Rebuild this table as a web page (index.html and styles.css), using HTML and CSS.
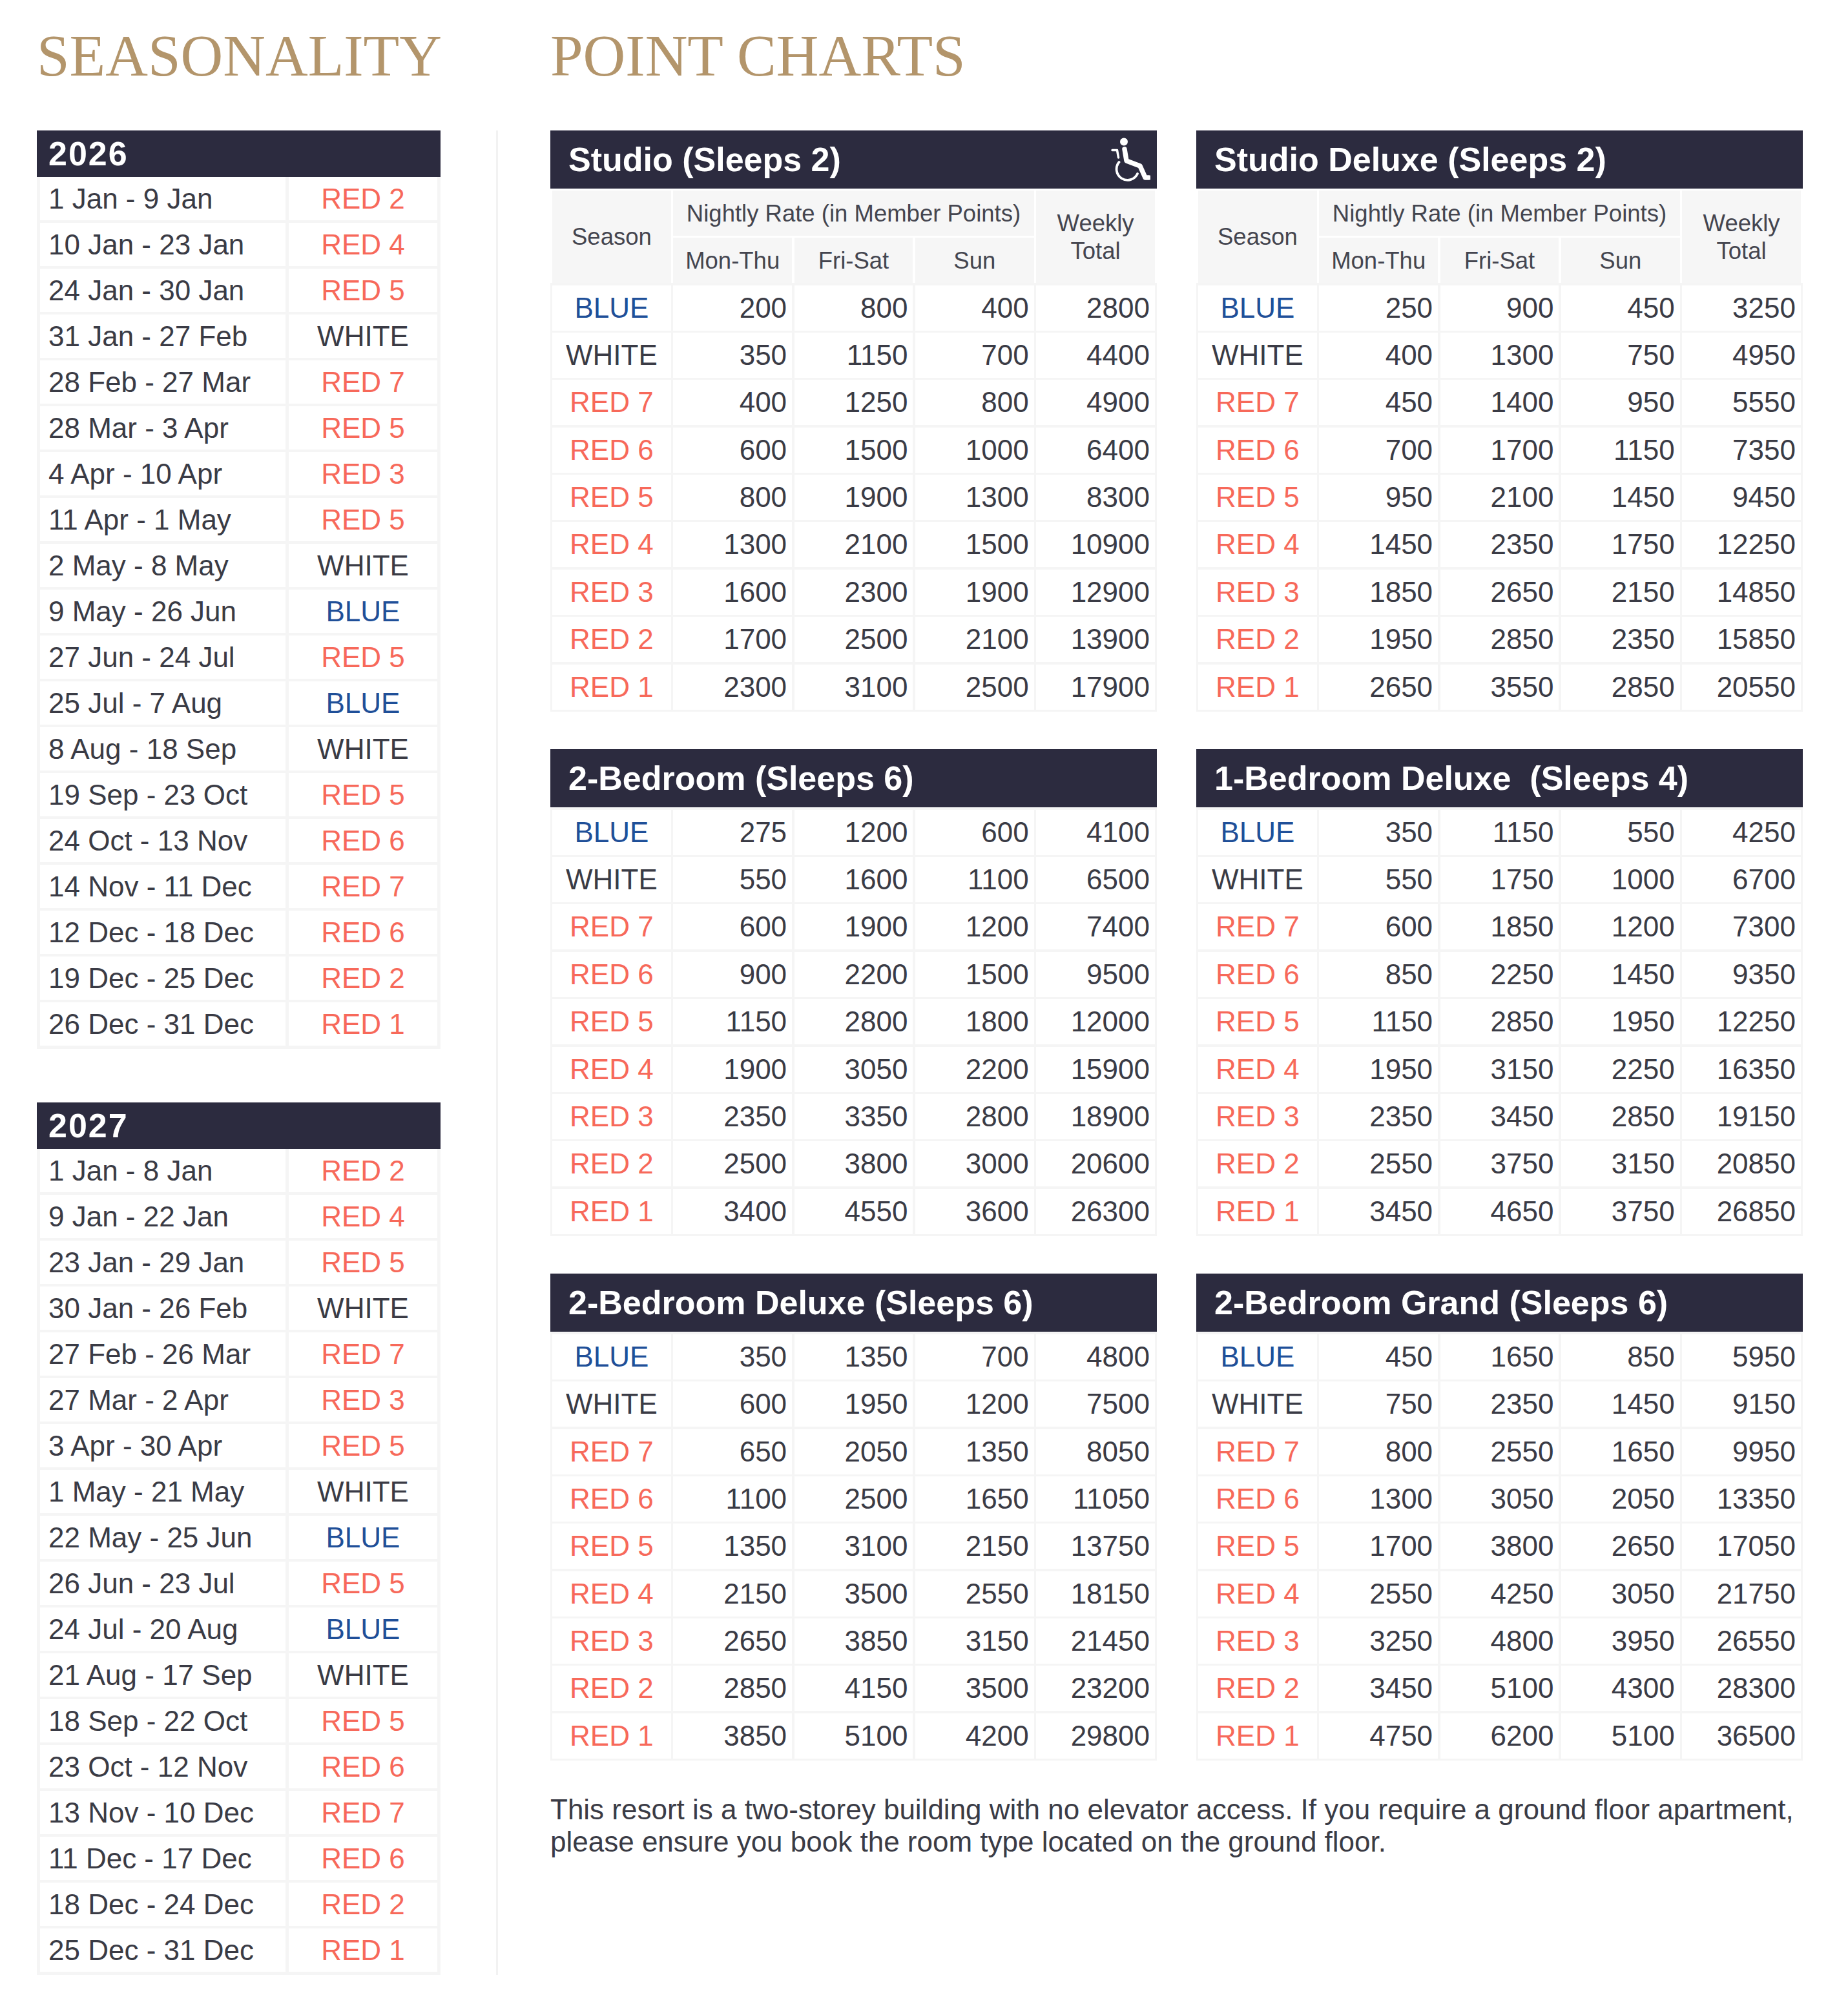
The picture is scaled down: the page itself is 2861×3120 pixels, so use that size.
FILE: index.html
```html
<!DOCTYPE html>
<html lang="en">
<head>
<meta charset="utf-8">
<title>Seasonality &amp; Point Charts</title>
<link rel="stylesheet" href="styles.css">
</head>
<body>
<div class="page">
  <section class="seasonality">
    <h1 class="title">SEASONALITY</h1>

    <div class="year">2026</div>
    <div class="season-grid">
      <div class="date">1 Jan - 9 Jan</div><div class="sea red">RED 2</div>
      <div class="date">10 Jan - 23 Jan</div><div class="sea red">RED 4</div>
      <div class="date">24 Jan - 30 Jan</div><div class="sea red">RED 5</div>
      <div class="date">31 Jan - 27 Feb</div><div class="sea">WHITE</div>
      <div class="date">28 Feb - 27 Mar</div><div class="sea red">RED 7</div>
      <div class="date">28 Mar - 3 Apr</div><div class="sea red">RED 5</div>
      <div class="date">4 Apr - 10 Apr</div><div class="sea red">RED 3</div>
      <div class="date">11 Apr - 1 May</div><div class="sea red">RED 5</div>
      <div class="date">2 May - 8 May</div><div class="sea">WHITE</div>
      <div class="date">9 May - 26 Jun</div><div class="sea blue">BLUE</div>
      <div class="date">27 Jun - 24 Jul</div><div class="sea red">RED 5</div>
      <div class="date">25 Jul - 7 Aug</div><div class="sea blue">BLUE</div>
      <div class="date">8 Aug - 18 Sep</div><div class="sea">WHITE</div>
      <div class="date">19 Sep - 23 Oct</div><div class="sea red">RED 5</div>
      <div class="date">24 Oct - 13 Nov</div><div class="sea red">RED 6</div>
      <div class="date">14 Nov - 11 Dec</div><div class="sea red">RED 7</div>
      <div class="date">12 Dec - 18 Dec</div><div class="sea red">RED 6</div>
      <div class="date">19 Dec - 25 Dec</div><div class="sea red">RED 2</div>
      <div class="date">26 Dec - 31 Dec</div><div class="sea red">RED 1</div>
    </div>

    <div class="year year-2">2027</div>
    <div class="season-grid">
      <div class="date">1 Jan - 8 Jan</div><div class="sea red">RED 2</div>
      <div class="date">9 Jan - 22 Jan</div><div class="sea red">RED 4</div>
      <div class="date">23 Jan - 29 Jan</div><div class="sea red">RED 5</div>
      <div class="date">30 Jan - 26 Feb</div><div class="sea">WHITE</div>
      <div class="date">27 Feb - 26 Mar</div><div class="sea red">RED 7</div>
      <div class="date">27 Mar - 2 Apr</div><div class="sea red">RED 3</div>
      <div class="date">3 Apr - 30 Apr</div><div class="sea red">RED 5</div>
      <div class="date">1 May - 21 May</div><div class="sea">WHITE</div>
      <div class="date">22 May - 25 Jun</div><div class="sea blue">BLUE</div>
      <div class="date">26 Jun - 23 Jul</div><div class="sea red">RED 5</div>
      <div class="date">24 Jul - 20 Aug</div><div class="sea blue">BLUE</div>
      <div class="date">21 Aug - 17 Sep</div><div class="sea">WHITE</div>
      <div class="date">18 Sep - 22 Oct</div><div class="sea red">RED 5</div>
      <div class="date">23 Oct - 12 Nov</div><div class="sea red">RED 6</div>
      <div class="date">13 Nov - 10 Dec</div><div class="sea red">RED 7</div>
      <div class="date">11 Dec - 17 Dec</div><div class="sea red">RED 6</div>
      <div class="date">18 Dec - 24 Dec</div><div class="sea red">RED 2</div>
      <div class="date">25 Dec - 31 Dec</div><div class="sea red">RED 1</div>
    </div>
  </section>

  <div class="divider"></div>

  <section class="charts">
    <h1 class="title">POINT CHARTS</h1>

    <div class="chart-grid">
      <!-- Studio -->
      <div class="chart">
        <div class="chart-head">
          <span>Studio (Sleeps 2)</span>
          <svg class="wheelchair" viewBox="0 0 62 68" width="62" height="68" aria-label="Accessible">
            <circle cx="21" cy="6.5" r="6" fill="#fff"/>
            <path d="M22 18 L25 36 L46 44 L54 62 L60 62" fill="none" stroke="#fff" stroke-width="7.5" stroke-linejoin="round" stroke-linecap="round"/>
            <path d="M3 19.5 L10.5 19.5 L12.5 31" fill="none" stroke="#fff" stroke-width="3.5" stroke-linejoin="round" stroke-linecap="round"/>
            <path d="M13.5 38 A17 17 0 1 0 42 56" fill="none" stroke="#fff" stroke-width="3.8" stroke-linecap="round"/>
          </svg>
        </div>
        <div class="chart-sub">
          <div class="sh sh-season">Season</div>
          <div class="sh sh-nightly">Nightly Rate (in Member Points)</div>
          <div class="sh sh-weekly">Weekly<br>Total</div>
          <div class="sh">Mon-Thu</div><div class="sh">Fri-Sat</div><div class="sh">Sun</div>
        </div>
        <div class="chart-table">
          <div class="c s blue">BLUE</div><div class="c">200</div><div class="c">800</div><div class="c">400</div><div class="c">2800</div>
          <div class="c s">WHITE</div><div class="c">350</div><div class="c">1150</div><div class="c">700</div><div class="c">4400</div>
          <div class="c s red">RED 7</div><div class="c">400</div><div class="c">1250</div><div class="c">800</div><div class="c">4900</div>
          <div class="c s red">RED 6</div><div class="c">600</div><div class="c">1500</div><div class="c">1000</div><div class="c">6400</div>
          <div class="c s red">RED 5</div><div class="c">800</div><div class="c">1900</div><div class="c">1300</div><div class="c">8300</div>
          <div class="c s red">RED 4</div><div class="c">1300</div><div class="c">2100</div><div class="c">1500</div><div class="c">10900</div>
          <div class="c s red">RED 3</div><div class="c">1600</div><div class="c">2300</div><div class="c">1900</div><div class="c">12900</div>
          <div class="c s red">RED 2</div><div class="c">1700</div><div class="c">2500</div><div class="c">2100</div><div class="c">13900</div>
          <div class="c s red">RED 1</div><div class="c">2300</div><div class="c">3100</div><div class="c">2500</div><div class="c">17900</div>
        </div>
      </div>

      <!-- Studio Deluxe -->
      <div class="chart">
        <div class="chart-head"><span>Studio Deluxe (Sleeps 2)</span></div>
        <div class="chart-sub">
          <div class="sh sh-season">Season</div>
          <div class="sh sh-nightly">Nightly Rate (in Member Points)</div>
          <div class="sh sh-weekly">Weekly<br>Total</div>
          <div class="sh">Mon-Thu</div><div class="sh">Fri-Sat</div><div class="sh">Sun</div>
        </div>
        <div class="chart-table">
          <div class="c s blue">BLUE</div><div class="c">250</div><div class="c">900</div><div class="c">450</div><div class="c">3250</div>
          <div class="c s">WHITE</div><div class="c">400</div><div class="c">1300</div><div class="c">750</div><div class="c">4950</div>
          <div class="c s red">RED 7</div><div class="c">450</div><div class="c">1400</div><div class="c">950</div><div class="c">5550</div>
          <div class="c s red">RED 6</div><div class="c">700</div><div class="c">1700</div><div class="c">1150</div><div class="c">7350</div>
          <div class="c s red">RED 5</div><div class="c">950</div><div class="c">2100</div><div class="c">1450</div><div class="c">9450</div>
          <div class="c s red">RED 4</div><div class="c">1450</div><div class="c">2350</div><div class="c">1750</div><div class="c">12250</div>
          <div class="c s red">RED 3</div><div class="c">1850</div><div class="c">2650</div><div class="c">2150</div><div class="c">14850</div>
          <div class="c s red">RED 2</div><div class="c">1950</div><div class="c">2850</div><div class="c">2350</div><div class="c">15850</div>
          <div class="c s red">RED 1</div><div class="c">2650</div><div class="c">3550</div><div class="c">2850</div><div class="c">20550</div>
        </div>
      </div>

      <!-- 2-Bedroom -->
      <div class="chart">
        <div class="chart-head"><span>2-Bedroom (Sleeps 6)</span></div>
        <div class="chart-table">
          <div class="c s blue">BLUE</div><div class="c">275</div><div class="c">1200</div><div class="c">600</div><div class="c">4100</div>
          <div class="c s">WHITE</div><div class="c">550</div><div class="c">1600</div><div class="c">1100</div><div class="c">6500</div>
          <div class="c s red">RED 7</div><div class="c">600</div><div class="c">1900</div><div class="c">1200</div><div class="c">7400</div>
          <div class="c s red">RED 6</div><div class="c">900</div><div class="c">2200</div><div class="c">1500</div><div class="c">9500</div>
          <div class="c s red">RED 5</div><div class="c">1150</div><div class="c">2800</div><div class="c">1800</div><div class="c">12000</div>
          <div class="c s red">RED 4</div><div class="c">1900</div><div class="c">3050</div><div class="c">2200</div><div class="c">15900</div>
          <div class="c s red">RED 3</div><div class="c">2350</div><div class="c">3350</div><div class="c">2800</div><div class="c">18900</div>
          <div class="c s red">RED 2</div><div class="c">2500</div><div class="c">3800</div><div class="c">3000</div><div class="c">20600</div>
          <div class="c s red">RED 1</div><div class="c">3400</div><div class="c">4550</div><div class="c">3600</div><div class="c">26300</div>
        </div>
      </div>

      <!-- 1-Bedroom Deluxe -->
      <div class="chart">
        <div class="chart-head"><span>1-Bedroom Deluxe&nbsp; (Sleeps 4)</span></div>
        <div class="chart-table">
          <div class="c s blue">BLUE</div><div class="c">350</div><div class="c">1150</div><div class="c">550</div><div class="c">4250</div>
          <div class="c s">WHITE</div><div class="c">550</div><div class="c">1750</div><div class="c">1000</div><div class="c">6700</div>
          <div class="c s red">RED 7</div><div class="c">600</div><div class="c">1850</div><div class="c">1200</div><div class="c">7300</div>
          <div class="c s red">RED 6</div><div class="c">850</div><div class="c">2250</div><div class="c">1450</div><div class="c">9350</div>
          <div class="c s red">RED 5</div><div class="c">1150</div><div class="c">2850</div><div class="c">1950</div><div class="c">12250</div>
          <div class="c s red">RED 4</div><div class="c">1950</div><div class="c">3150</div><div class="c">2250</div><div class="c">16350</div>
          <div class="c s red">RED 3</div><div class="c">2350</div><div class="c">3450</div><div class="c">2850</div><div class="c">19150</div>
          <div class="c s red">RED 2</div><div class="c">2550</div><div class="c">3750</div><div class="c">3150</div><div class="c">20850</div>
          <div class="c s red">RED 1</div><div class="c">3450</div><div class="c">4650</div><div class="c">3750</div><div class="c">26850</div>
        </div>
      </div>

      <!-- 2-Bedroom Deluxe -->
      <div class="chart">
        <div class="chart-head"><span>2-Bedroom Deluxe (Sleeps 6)</span></div>
        <div class="chart-table">
          <div class="c s blue">BLUE</div><div class="c">350</div><div class="c">1350</div><div class="c">700</div><div class="c">4800</div>
          <div class="c s">WHITE</div><div class="c">600</div><div class="c">1950</div><div class="c">1200</div><div class="c">7500</div>
          <div class="c s red">RED 7</div><div class="c">650</div><div class="c">2050</div><div class="c">1350</div><div class="c">8050</div>
          <div class="c s red">RED 6</div><div class="c">1100</div><div class="c">2500</div><div class="c">1650</div><div class="c">11050</div>
          <div class="c s red">RED 5</div><div class="c">1350</div><div class="c">3100</div><div class="c">2150</div><div class="c">13750</div>
          <div class="c s red">RED 4</div><div class="c">2150</div><div class="c">3500</div><div class="c">2550</div><div class="c">18150</div>
          <div class="c s red">RED 3</div><div class="c">2650</div><div class="c">3850</div><div class="c">3150</div><div class="c">21450</div>
          <div class="c s red">RED 2</div><div class="c">2850</div><div class="c">4150</div><div class="c">3500</div><div class="c">23200</div>
          <div class="c s red">RED 1</div><div class="c">3850</div><div class="c">5100</div><div class="c">4200</div><div class="c">29800</div>
        </div>
      </div>

      <!-- 2-Bedroom Grand -->
      <div class="chart">
        <div class="chart-head"><span>2-Bedroom Grand (Sleeps 6)</span></div>
        <div class="chart-table">
          <div class="c s blue">BLUE</div><div class="c">450</div><div class="c">1650</div><div class="c">850</div><div class="c">5950</div>
          <div class="c s">WHITE</div><div class="c">750</div><div class="c">2350</div><div class="c">1450</div><div class="c">9150</div>
          <div class="c s red">RED 7</div><div class="c">800</div><div class="c">2550</div><div class="c">1650</div><div class="c">9950</div>
          <div class="c s red">RED 6</div><div class="c">1300</div><div class="c">3050</div><div class="c">2050</div><div class="c">13350</div>
          <div class="c s red">RED 5</div><div class="c">1700</div><div class="c">3800</div><div class="c">2650</div><div class="c">17050</div>
          <div class="c s red">RED 4</div><div class="c">2550</div><div class="c">4250</div><div class="c">3050</div><div class="c">21750</div>
          <div class="c s red">RED 3</div><div class="c">3250</div><div class="c">4800</div><div class="c">3950</div><div class="c">26550</div>
          <div class="c s red">RED 2</div><div class="c">3450</div><div class="c">5100</div><div class="c">4300</div><div class="c">28300</div>
          <div class="c s red">RED 1</div><div class="c">4750</div><div class="c">6200</div><div class="c">5100</div><div class="c">36500</div>
        </div>
      </div>
    </div>

    <p class="note">This resort is a two-storey building with no elevator access. If you require a ground floor apartment, please ensure you book the room type located on the ground floor.</p>
  </section>
</div>
</body>
</html>
```

FILE: styles.css
```css
* { box-sizing: border-box; }

html, body {
  margin: 0;
  padding: 0;
  background: #ffffff;
}

body {
  font-family: "Liberation Sans", Arial, sans-serif;
  color: #3a3b45;
}

.page {
  display: flex;
  align-items: stretch;
  width: 2861px;
  padding: 41px 0 0 57px;
}

.title {
  margin: 0 0 70px;
  font-family: "Liberation Serif", "Times New Roman", serif;
  font-weight: 400;
  font-size: 91px;
  line-height: 91px;
  color: #b3956b;
  white-space: nowrap;
}

/* ---------- Seasonality ---------- */
.seasonality {
  flex: none;
  width: 625px;
}

.year {
  height: 72px;
  display: flex;
  align-items: center;
  padding-left: 18px;
  background: #2c2b3f;
  color: #ffffff;
  font-weight: 700;
  font-size: 52px;
  letter-spacing: 2px;
}

.year-2 {
  margin-top: 83px;
}

.season-grid {
  display: grid;
  grid-template-columns: 380px 1fr;
  grid-auto-rows: 67px;
  column-gap: 5px;
  row-gap: 4px;
  padding: 0 5px 5px;
  background: #f5f5f5;
}

.season-grid > div {
  background: #ffffff;
  display: flex;
  align-items: center;
  font-size: 44px;
  white-space: nowrap;
}

.season-grid .date {
  padding-left: 13px;
}

.season-grid .sea {
  justify-content: center;
}

.red { color: #f7695a !important; }
.blue { color: #1f4f98 !important; }

/* ---------- Divider ---------- */
.divider {
  flex: none;
  width: 3px;
  margin: 161px 81px 0 86px;
  background: #f2f2f2;
}

/* ---------- Point charts ---------- */
.charts {
  flex: none;
  width: 1939px;
}

.chart-grid {
  display: grid;
  grid-template-columns: 939px 939px;
  column-gap: 61px;
  row-gap: 58px;
}

.chart-head {
  height: 90px;
  display: flex;
  align-items: center;
  justify-content: space-between;
  padding: 0 10px 0 28px;
  background: #2c2b3f;
  color: #ffffff;
  font-weight: 700;
  font-size: 52px;
  white-space: nowrap;
}

.wheelchair {
  display: block;
  flex: none;
}

.chart-sub {
  display: grid;
  grid-template-columns: repeat(5, 1fr);
  grid-auto-rows: 70px;
  column-gap: 3.5px;
  row-gap: 3px;
  padding: 3px 3px 0;
  background: #ffffff;
}

.sh {
  display: flex;
  align-items: center;
  justify-content: center;
  text-align: center;
  background: #f6f6f6;
  color: #44454f;
  font-size: 36.5px;
  line-height: 43px;
  white-space: nowrap;
}

.sh-season { grid-row: span 2; }
.sh-nightly { grid-column: span 3; }
.sh-weekly { grid-row: span 2; }

.chart-table {
  display: grid;
  grid-template-columns: repeat(5, 1fr);
  grid-auto-rows: 70px;
  column-gap: 3.5px;
  row-gap: 3.4px;
  padding: 3.5px 3px 3.5px;
  background: #f5f5f5;
}

.c {
  display: flex;
  align-items: center;
  justify-content: flex-end;
  padding-right: 8px;
  background: #ffffff;
  font-size: 44px;
  white-space: nowrap;
}

.c.s {
  justify-content: center;
  padding-right: 0;
}

/* ---------- Note ---------- */
.note {
  margin: 51px 0 0;
  font-size: 44px;
  line-height: 50px;
  color: #3a3b45;
}
```
